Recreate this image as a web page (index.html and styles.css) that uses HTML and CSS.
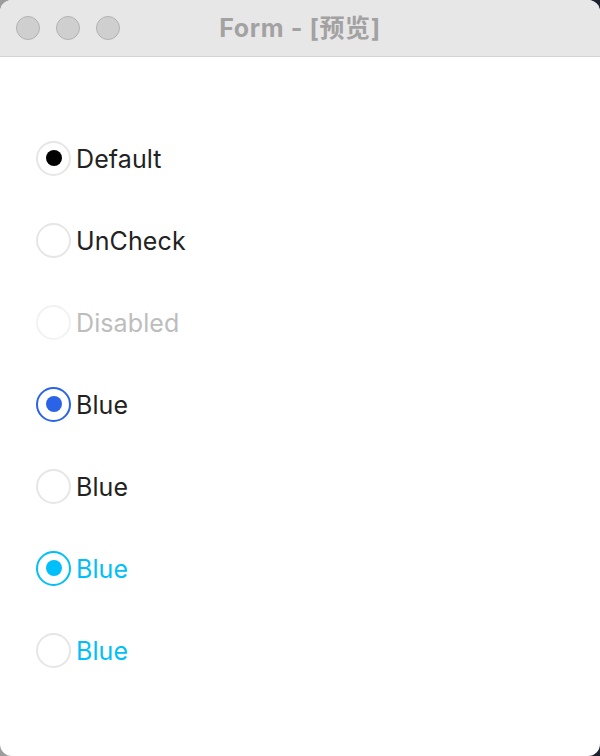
FILE: index.html
```html
<!DOCTYPE html>
<html lang="zh">
<head>
<meta charset="utf-8">
<title>Form - [预览]</title>
<link rel="stylesheet" href="styles.css">
</head>
<body>
<div class="window">
  <div class="titlebar">
    <div class="lights">
      <span class="light"></span>
      <span class="light"></span>
      <span class="light"></span>
    </div>
    <div class="title">Form - [预览]</div>
  </div>
  <div class="content">
    <label class="row"><span class="radio checked"><span class="dot"></span></span><span class="label">Default</span></label>
    <label class="row"><span class="radio"></span><span class="label">UnCheck</span></label>
    <label class="row disabled"><span class="radio"></span><span class="label">Disabled</span></label>
    <label class="row blue"><span class="radio checked"><span class="dot"></span></span><span class="label">Blue</span></label>
    <label class="row"><span class="radio"></span><span class="label">Blue</span></label>
    <label class="row cyan"><span class="radio checked"><span class="dot"></span></span><span class="label">Blue</span></label>
    <label class="row cyan-text"><span class="radio"></span><span class="label">Blue</span></label>
  </div>
</div>
</body>
</html>
```
FILE: styles.css
```css
html, body {
  margin: 0;
  padding: 0;
  height: 100%;
}
body {
  background: linear-gradient(to right, #9c9c9c 0%, #9c9c9c 50%, #1d2230 50%, #1d2230 100%);
  font-family: Inter, "Noto Sans CJK SC", sans-serif;
}
.window {
  height: 756px;
  width: 600px;
  background: #fff;
  border-radius: 12px;
  overflow: hidden;
  display: flex;
  flex-direction: column;
}
.titlebar {
  height: 56px;
  flex: none;
  background: #e8e7e8;
  border-bottom: 1px solid #d4d4d4;
  position: relative;
  display: flex;
  align-items: center;
}
.lights {
  display: flex;
  gap: 16px;
  padding-left: 16px;
  padding-bottom: 1px;
}
.light {
  border-radius: 50%;
  background: #cfcfcf;
  border: 1px solid #b3b3b3;
  box-sizing: border-box;
  width: 24px;
  height: 24px;
}
.title {
  position: absolute;
  left: 0;
  right: 0;
  top: 0;
  bottom: 0;
  display: flex;
  align-items: center;
  justify-content: center;
  font-size: 25px;
  font-weight: 700;
  color: #a2a2a2;
  padding-left: 0;
  padding-bottom: 4px;
  letter-spacing: 0.6px;
}
.content {
  padding: 60px 0 0 36px;
  display: flex;
  flex-direction: column;
}
.row {
  height: 82px;
  display: flex;
  align-items: center;
  gap: 5px;
}
.radio {
  width: 35px;
  height: 35px;
  box-sizing: border-box;
  border-radius: 50%;
  border: 2px solid #e6e6e6;
  display: flex;
  align-items: center;
  justify-content: center;
  background: #fff;
}
.dot {
  width: 16px;
  height: 16px;
  border-radius: 50%;
  background: #000;
}
.label {
  font-size: 25px;
  color: #222;
  letter-spacing: 0.1px;
  padding-top: 1px;
}
.disabled .radio {
  border-color: #f2f2f2;
}
.disabled .label {
  color: #bdbdbd;
}
.blue .radio {
  border-color: #2b63e8;
}
.blue .dot {
  background: #2b63e8;
}
.cyan .radio {
  border-color: #00bff9;
}
.cyan .dot {
  background: #00bff9;
}
.cyan .label,
.cyan-text .label {
  color: #00bff9;
}
```
